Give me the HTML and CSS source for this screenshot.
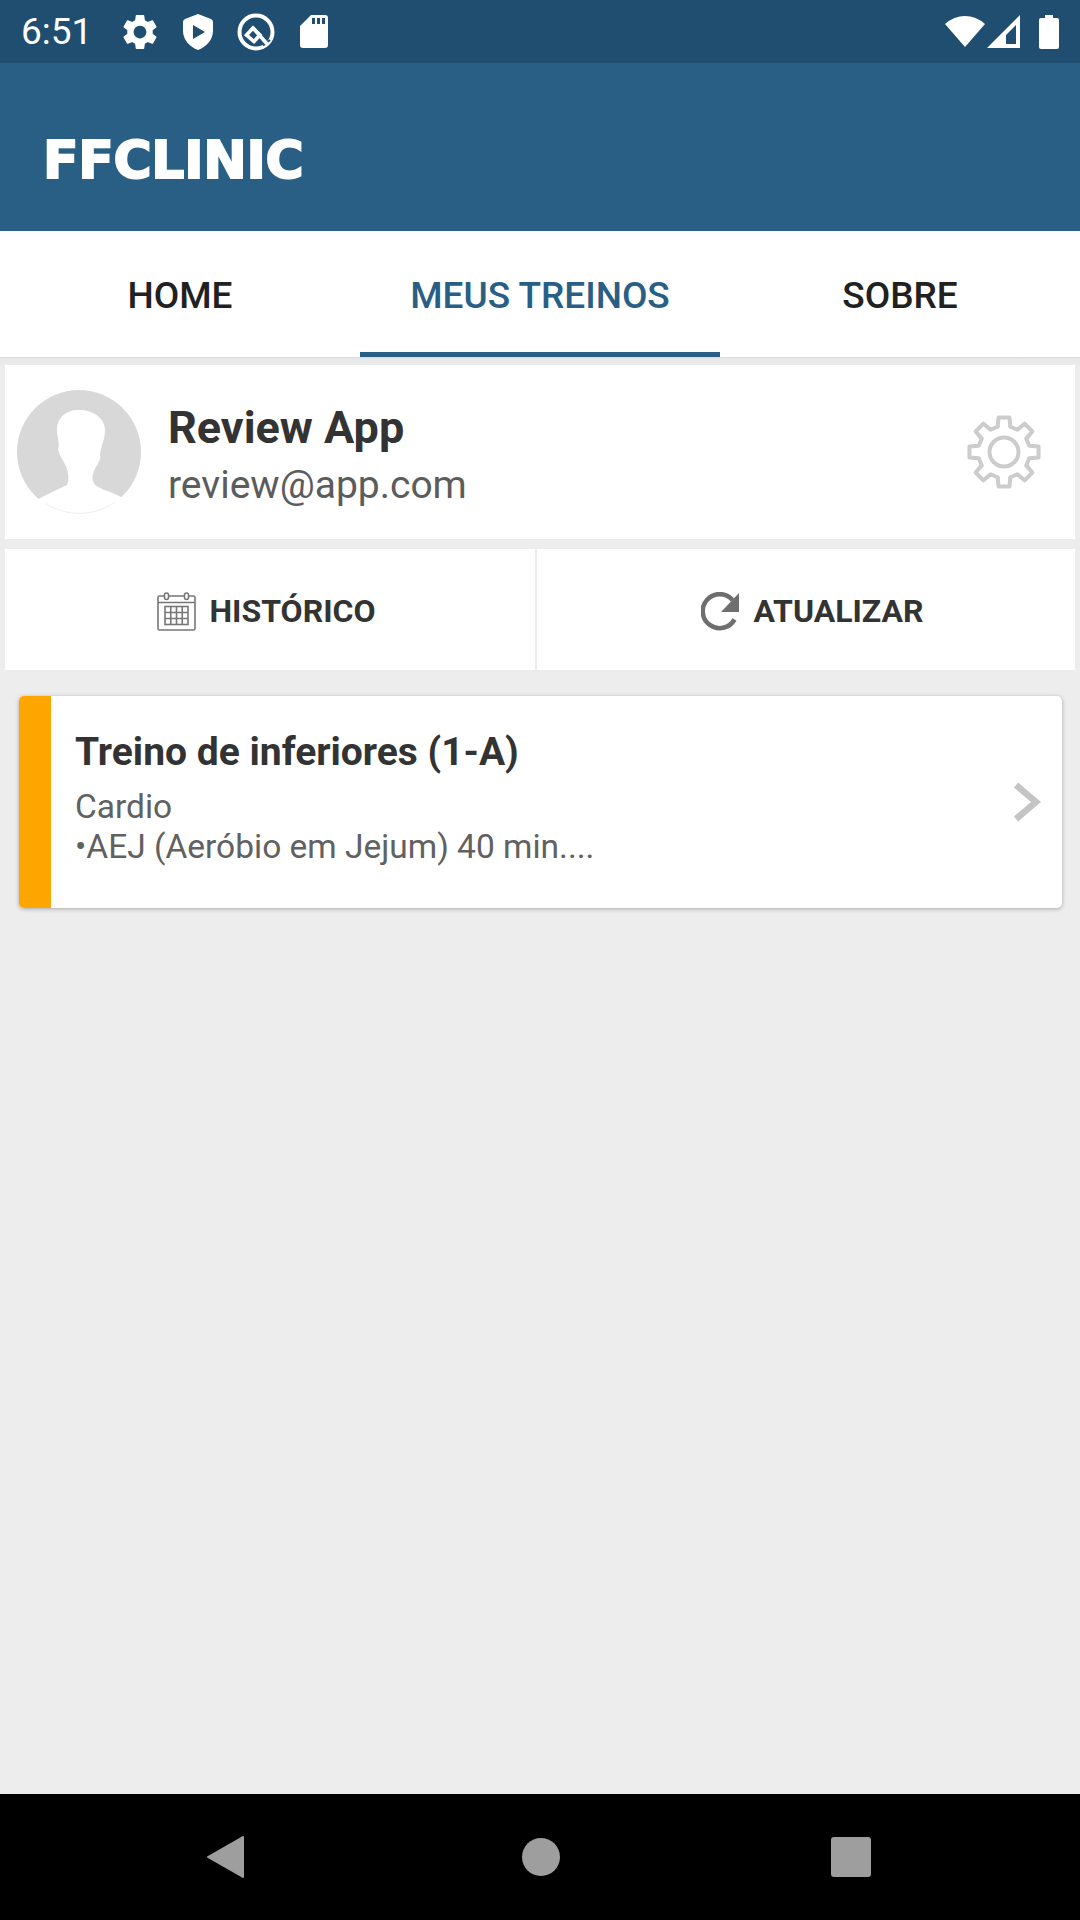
FILE: index.html
```html
<!DOCTYPE html>
<html lang="pt">
<head>
<meta charset="utf-8">
<title>FFCLINIC</title>
<link rel="stylesheet" href="styles.css">
</head>
<body>
<div class="status">
  <span class="time">6:51</span>
  <svg class="st st-gear" viewBox="2.4 2 19.2 20"><path fill="#fff" d="M19.14 12.94c.04-.3.06-.61.06-.94 0-.32-.02-.64-.07-.94l2.03-1.58c.18-.14.23-.41.12-.61l-1.92-3.32c-.12-.22-.37-.29-.59-.22l-2.39.96c-.5-.38-1.03-.7-1.62-.94l-.36-2.54c-.04-.24-.24-.41-.48-.41h-3.84c-.24 0-.43.17-.47.41l-.36 2.54c-.59.24-1.13.57-1.62.94l-2.39-.96c-.22-.08-.47 0-.59.22L2.74 8.87c-.12.21-.08.47.12.61l2.03 1.58c-.05.3-.09.63-.09.94s.02.64.07.94l-2.03 1.58c-.18.14-.23.41-.12.61l1.92 3.32c.12.22.37.29.59.22l2.39-.96c.5.38 1.03.7 1.62.94l.36 2.54c.05.24.24.41.48.41h3.84c.24 0 .44-.17.47-.41l.36-2.54c.59-.24 1.13-.56 1.62-.94l2.39.96c.22.08.47 0 .59-.22l1.92-3.32c.12-.22.07-.47-.12-.61l-2.01-1.58zM12 15.6c-1.98 0-3.6-1.62-3.6-3.6s1.62-3.6 3.6-3.6 3.6 1.62 3.6 3.6-1.62 3.6-3.6 3.6z"/></svg>
  <svg class="st st-shield" viewBox="0 0 30 36"><path fill="#fff" fill-rule="evenodd" d="M15 0 L28 5 Q30 6 30 8 V17 C30 26 23 33 15 36 C7 33 0 26 0 17 V8 Q0 6 2 5 Z M10 11 V25 L22 18 Z"/></svg>
  <svg class="st st-q" viewBox="0 0 38 38"><circle cx="19" cy="19" r="16.5" fill="none" stroke="#fff" stroke-width="4"/><path fill="none" stroke="#fff" stroke-width="3.6" d="M16 15 L9.5 22 L17 28.5 L23 22 Z"/><path fill="none" stroke="#1f4e70" stroke-width="2" d="M26 32.5 L33 27"/><path fill="none" stroke="#fff" stroke-width="3.6" d="M16 15 L31 32"/></svg>
  <svg class="st st-sd" viewBox="0 0 28 33"><path fill="#fff" fill-rule="evenodd" d="M11 0 H25 Q28 0 28 3 V30 Q28 33 25 33 H3 Q0 33 0 30 V11 Z M12 3 V9 H15 V3 Z M17 3 V9 H20 V3 Z M22 3 V9 H25 V3 Z"/></svg>
  <span class="spacer"></span>
  <svg class="st st-wifi" viewBox="0 0 40 31"><path fill="#fff" d="M20 31 L0 8 Q9 0 20 0 Q31 0 40 8 Z"/></svg>
  <svg class="st st-signal" viewBox="0 0 33 33"><path fill="#fff" fill-rule="evenodd" d="M33 0 V33 H0 Z M29 10 L19 20 V29 H29 Z"/></svg>
  <svg class="st st-batt" viewBox="0 0 20 34"><path fill="#fff" d="M6 0 H14 V3 H18 Q20 3 20 5 V32 Q20 34 18 34 H2 Q0 34 0 32 V5 Q0 3 2 3 H6 Z"/></svg>
</div>
<header class="appbar"><h1 class="logo">FFCLINIC</h1></header>
<nav class="tabs">
  <div class="tab">HOME</div>
  <div class="tab tab-active">MEUS TREINOS</div>
  <div class="tab">SOBRE</div>
</nav>
<main class="content">
  <section class="profile">
    <svg class="avatar" viewBox="0 0 124 124">
      <circle cx="62" cy="62" r="62" fill="#d8d8d8"/>
      <path fill="#fff" d="M62 20 C48 20 40 28 40 40 C40 48 43 52 41 60 C43 68 51 76 51 84 C52 90 51 92 50 95 C40 100 32 103 20 110 L20 124 H104 L104 107 C95 102 85 100 78 95 C75 90 75 88 76 84 C78 76 85 70 83 65 C84 55 88 50 88 40 C88 28 76 20 62 20 Z"/>
      <path fill="none" stroke="#efefef" stroke-width="1" d="M28 113 A61.5 61.5 0 0 0 98 112"/>
    </svg>
    <div class="who">
      <div class="name">Review App</div>
      <div class="email">review@app.com</div>
    </div>
    <svg class="cog" viewBox="0 0 76 76">
      <path fill="none" stroke="#ccc" stroke-width="4" stroke-linejoin="round" d="M32.53 3.43H43.47L44.29 12.77L51.39 15.71L58.57 9.68L66.32 17.43L60.29 24.61L63.23 31.71L72.57 32.53V43.47L63.23 44.29L60.29 51.39L66.32 58.57L58.57 66.32L51.39 60.29L44.29 63.23L43.47 72.57H32.53L31.71 63.23L24.61 60.29L17.43 66.32L9.68 58.57L15.71 51.39L12.77 44.29L3.43 43.47V32.53L12.77 31.71L15.71 24.61L9.68 17.43L17.43 9.68L24.61 15.71L31.71 12.77Z"/>
      <circle cx="38" cy="38" r="14.5" fill="none" stroke="#ccc" stroke-width="4"/>
    </svg>
  </section>
  <section class="actions">
    <div class="action action-history">
      <svg class="act-icon" viewBox="0 0 39 39">
        <g fill="none" stroke="#777" stroke-width="1.6">
          <rect x="1" y="4" width="37" height="34" rx="1.5"/>
          <path d="M1 10.5H38"/>
          <rect x="8" y="14.5" width="23" height="18"/>
          <path d="M8 20.5H31M8 26.5H31M13.75 14.5V32.5M19.5 14.5V32.5M25.25 14.5V32.5"/>
          <rect x="7.5" y="1" width="4" height="6.5" rx="2" fill="#fff"/>
          <rect x="27.5" y="1" width="4" height="6.5" rx="2" fill="#fff"/>
        </g>
      </svg>
      <span>HISTÓRICO</span>
    </div>
    <div class="action action-refresh">
      <svg class="act-icon" viewBox="0 0 39 39">
        <path fill="none" stroke="#6e6e6e" stroke-width="4.6" d="M33.5 27.5A17 17 0 1 1 31.5 8"/>
        <path fill="#6e6e6e" d="M38 1V20H20Z"/>
      </svg>
      <span>ATUALIZAR</span>
    </div>
  </section>
  <article class="card">
    <div class="card-bar"></div>
    <div class="card-body">
      <div class="card-title">Treino de inferiores (1-A)</div>
      <div class="card-text">Cardio<br>•AEJ (Aeróbio em Jejum) 40 min....</div>
    </div>
    <svg class="chev" viewBox="0 0 28 40"><path fill="none" stroke="#c4c4c4" stroke-width="6.5" d="M3 3L23 20L3 37"/></svg>
  </article>
</main>
<footer class="nav">
  <svg class="nav-back" viewBox="0 0 37 42"><path fill="#9e9e9e" stroke="#9e9e9e" stroke-width="2" stroke-linejoin="round" d="M36 1V41L1 21Z"/></svg>
  <span class="nav-home"></span>
  <span class="nav-recent"></span>
</footer>
</body>
</html>
```
FILE: styles.css
```css
* { box-sizing: border-box; }
html, body { margin: 0; padding: 0; }
body {
  width: 1080px;
  height: 1920px;
  display: flex;
  flex-direction: column;
  background: #ededed;
  font-family: Roboto, "Liberation Sans", sans-serif;
  overflow: hidden;
}
.status {
  height: 63px;
  flex: none;
  display: flex;
  align-items: center;
  padding: 0 21px 0 21px;
  background: #1f4e70;
  color: #fff;
}
.time { font-size: 37px; width: 102px; }
.st { display: block; flex: none; }
.st-gear { width: 34px; height: 36px; margin-right: 26px; }
.st-shield { width: 30px; height: 36px; margin-right: 24px; }
.st-q { width: 38px; height: 38px; margin-right: 25px; }
.st-sd { width: 28px; height: 33px; }
.spacer { flex: 1; }
.st-wifi { width: 40px; height: 31px; margin-right: 2px; }
.st-signal { width: 33px; height: 33px; margin-right: 19px; }
.st-batt { width: 20px; height: 34px; }
.appbar {
  height: 168px;
  flex: none;
  display: flex;
  align-items: center;
  padding: 26px 0 0 43px;
  background: #2a5f85;
}
.logo {
  margin: 0;
  font-family: "DejaVu Sans", sans-serif;
  font-size: 52px;
  font-weight: 700;
  letter-spacing: -0.3px;
  -webkit-text-stroke: 2px #fff;
  color: #fff;
}
.tabs {
  height: 126px;
  flex: none;
  display: flex;
  background: #fff;
}
.tab {
  flex: 1;
  display: flex;
  align-items: center;
  justify-content: center;
  font-size: 37px;
  font-weight: 500;
  color: #212121;
  padding-top: 2px;
}
.tab-active {
  color: #2a5f85;
  border-bottom: 5px solid #2a5f85;
  padding-top: 7px;
}
.content {
  flex: 1;
  padding: 7px 5px 0;
  border-top: 1px solid #dcdcdc;
  display: flex;
  flex-direction: column;
  background: linear-gradient(#e6e6e6, #ededed 8px);
}
.profile {
  height: 174px;
  flex: none;
  display: flex;
  align-items: center;
  background: #fff;
  padding: 0 33px 0 12px;
}
.avatar { width: 124px; height: 124px; margin-right: 27px; flex: none; }
.who { flex: 1; padding-top: 8px; }
.name { font-size: 45px; font-weight: 700; color: #333; line-height: 57px; }
.email { font-size: 39px; color: #5c5c5c; line-height: 58px; }
.cog { width: 76px; height: 76px; flex: none; }
.actions {
  height: 121px;
  flex: none;
  margin-top: 10px;
  display: flex;
  gap: 2px;
}
.action {
  display: flex;
  align-items: center;
  justify-content: center;
  gap: 14px;
  padding-top: 3px;
  background: #fff;
  font-size: 32px;
  font-weight: 700;
  color: #333;
}
.action-history { width: 530px; padding-right: 8px; }
.action-refresh { flex: 1; padding-left: 12px; }
.act-icon { width: 39px; height: 39px; flex: none; }
.card {
  height: 212px;
  flex: none;
  margin: 26px 13px 0 14px;
  display: flex;
  align-items: center;
  background: #fff;
  border-radius: 5px;
  overflow: hidden;
  box-shadow: 0 1px 4px rgba(0, 0, 0, 0.3);
}
.card-bar { width: 32px; align-self: stretch; background: #ffa500; flex: none; }
.card-body { flex: 1; padding: 0 0 10px 24px; }
.card-title { font-size: 39px; font-weight: 700; color: #333; line-height: 48px; margin-bottom: 11px; }
.card-text { font-size: 33.5px; color: #616161; line-height: 40px; }
.chev { width: 28px; height: 40px; margin-right: 21px; flex: none; }
.nav {
  height: 126px;
  flex: none;
  display: flex;
  align-items: center;
  justify-content: space-between;
  padding: 0 209px 0 207px;
  background: #000;
}
.nav-back { width: 37px; height: 42px; display: block; }
.nav-home { width: 38px; height: 38px; margin-left: 6px; border-radius: 50%; background: #9e9e9e; }
.nav-recent { width: 40px; height: 40px; border-radius: 3px; background: #9e9e9e; }
```
